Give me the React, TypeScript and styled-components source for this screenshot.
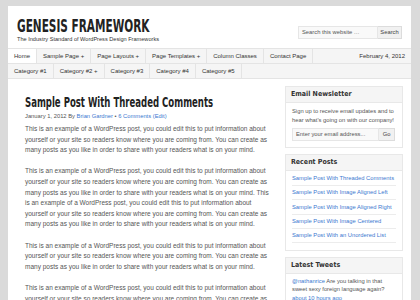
import React from 'react'
import styled, { createGlobalStyle } from 'styled-components'

const GlobalStyle = createGlobalStyle`
  body {
    margin: 0;
    background: #dadada;
    font-family: "Liberation Sans", Arial, sans-serif;
    color: #555;
  }
`

const condensed = `"Liberation Sans Narrow", "DejaVu Sans Condensed", sans-serif`

const Page = styled.div`
  width: 403px;
  height: 294px;
  margin: 6px 0 0 8px;
  background: #fff;
  overflow: hidden;
`

const Header = styled.div`
  display: flex;
  justify-content: space-between;
  align-items: flex-start;
  height: 42px;
  padding: 0 9px;
  box-sizing: border-box;
`

const Branding = styled.div`
  padding-top: 10px;
`

const SiteName = styled.h1`
  margin: 0;
  font-family: ${condensed};
  font-weight: bold;
  font-size: 18px;
  line-height: 19px;
  color: #222;
  white-space: nowrap;
  display: inline-block;
  transform: scale(0.65, 1);
  transform-origin: left;
`

const Tagline = styled.p`
  margin: 0;
  font-size: 5.6px;
  color: #333;
  white-space: nowrap;
`

const SearchForm = styled.form`
  display: flex;
  margin-top: 20px;
`

const SearchInput = styled.div`
  width: 80px;
  height: 13px;
  box-sizing: border-box;
  border: 1px solid #e6e6e6;
  background: #f9f9f9;
  font-size: 5.8px;
  line-height: 11px;
  padding-left: 3px;
  color: #555;
`

const SearchButton = styled.div`
  width: 24px;
  height: 13px;
  box-sizing: border-box;
  border: 1px solid #dcdcdc;
  border-left: none;
  background: #f1f1f1;
  font-size: 5.8px;
  line-height: 11px;
  text-align: center;
  color: #444;
`

const Nav = styled.ul<{ $top?: boolean }>`
  display: flex;
  margin: 0;
  padding: 0;
  list-style: none;
  background: #f5f5f5;
  border-top: ${p => (p.$top ? '1px solid #e4e4e4' : 'none')};
  border-bottom: 1px solid #e4e4e4;
  height: 14px;
`

const NavItem = styled.li<{ $active?: boolean }>`
  padding: 0 6px;
  font-size: 6px;
  line-height: 14px;
  color: #333;
  white-space: nowrap;
  border-right: 1px solid #e4e4e4;
  background: ${p => (p.$active ? '#fff' : 'transparent')};
`

const NavDate = styled.li`
  margin-left: auto;
  padding-right: 6px;
  font-size: 6px;
  line-height: 14px;
  color: #333;
`

const Main = styled.div`
  display: flex;
  justify-content: space-between;
  padding: 0 8px 0 17px;
`

const Content = styled.div`
  width: 246px;
  padding-top: 14px;
`

const PostTitle = styled.h2`
  margin: 0;
  font-family: ${condensed};
  font-weight: bold;
  font-size: 14.5px;
  line-height: 14px;
  color: #222;
  white-space: nowrap;
  display: inline-block;
  transform: scale(0.655, 1);
  transform-origin: left;
`

const Meta = styled.div`
  font-size: 5.8px;
  line-height: 8px;
  color: #555;
  margin: 1px 0 4px;
`

const Link = styled.a`
  color: #3b78d0;
  text-decoration: none;
`

const Para = styled.p`
  margin: 0 0 10.6px;
  font-size: 6.5px;
  line-height: 10.6px;
  color: #555;
`

const Sidebar = styled.div`
  width: 118px;
  padding-top: 7px;
`

const Widget = styled.div`
  border: 1px solid #e8e8e8;
  margin-bottom: 6px;
`

const WidgetTitle = styled.h4`
  margin: 0;
  height: 15px;
  padding-left: 5px;
  background: #f5f5f5;
  border-bottom: 1px solid #e8e8e8;
  font-family: ${condensed};
  font-weight: bold;
  font-size: 7px;
  line-height: 15px;
  color: #333;
`

const WidgetBody = styled.div<{ $list?: boolean }>`
  padding: ${p => (p.$list ? '3px 6px 4px' : '4px 6px 6px')};
  font-size: 5.8px;
  line-height: 8.6px;
  color: #555;
`

const SubscribeRow = styled.div`
  display: flex;
  margin-top: 4px;
`

const EmailInput = styled(SearchInput)`
  width: 87px;
`

const GoButton = styled(SearchButton)`
  width: 16px;
`

const PostList = styled.ul`
  margin: 0;
  padding: 0;
  list-style: none;
`

const PostItem = styled.li`
  line-height: 8px;
  padding-bottom: 3px;
  margin-bottom: 2.3px;
  border-bottom: 1px solid #ececec;
  white-space: nowrap;
`

const TweetTime = styled(Link)`
  display: block;
`

const text =
  'This is an example of a WordPress post, you could edit this to put information about yourself or your site so readers know where you are coming from. You can create as many posts as you like in order to share with your readers what is on your mind.'

const menu = [
  { label: 'Home', active: true },
  { label: 'Sample Page +' },
  { label: 'Page Layouts +' },
  { label: 'Page Templates +' },
  { label: 'Column Classes' },
  { label: 'Contact Page' },
]

const categories = ['Category #1', 'Category #2 +', 'Category #3', 'Category #4', 'Category #5']

const recent = [
  'Sample Post With Threaded Comments',
  'Sample Post With Image Aligned Left',
  'Sample Post With Image Aligned Right',
  'Sample Post With Image Centered',
  'Sample Post With an Unordered List',
]

export default function App() {
  return (
    <>
      <GlobalStyle />
      <Page>
        <Header>
          <Branding>
            <SiteName>GENESIS FRAMEWORK</SiteName>
            <Tagline>The Industry Standard of WordPress Design Frameworks</Tagline>
          </Branding>
          <SearchForm>
            <SearchInput>Search this website …</SearchInput>
            <SearchButton>Search</SearchButton>
          </SearchForm>
        </Header>

        <Nav $top>
          {menu.map(item => (
            <NavItem key={item.label} $active={item.active}>
              {item.label}
            </NavItem>
          ))}
          <NavDate>February 4, 2012</NavDate>
        </Nav>
        <Nav>
          {categories.map(c => (
            <NavItem key={c}>{c}</NavItem>
          ))}
        </Nav>

        <Main>
          <Content>
            <PostTitle>Sample Post With Threaded Comments</PostTitle>
            <Meta>
              January 1, 2012 By <Link href="#">Brian Gardner</Link> • <Link href="#">6 Comments</Link>{' '}
              <Link href="#">(Edit)</Link>
            </Meta>
            <Para>{text}</Para>
            <Para>
              {text} {text}
            </Para>
            <Para>{text}</Para>
            <Para>{text}</Para>
          </Content>

          <Sidebar>
            <Widget>
              <WidgetTitle>Email Newsletter</WidgetTitle>
              <WidgetBody>
                Sign up to receive email updates and to hear what's going on with our company!
                <SubscribeRow>
                  <EmailInput>Enter your email address...</EmailInput>
                  <GoButton>Go</GoButton>
                </SubscribeRow>
              </WidgetBody>
            </Widget>
            <Widget>
              <WidgetTitle>Recent Posts</WidgetTitle>
              <WidgetBody $list>
                <PostList>
                  {recent.map(r => (
                    <PostItem key={r}>
                      <Link href="#">{r}</Link>
                    </PostItem>
                  ))}
                </PostList>
              </WidgetBody>
            </Widget>
            <Widget>
              <WidgetTitle>Latest Tweets</WidgetTitle>
              <WidgetBody $list>
                <Link href="#">@nathanrice</Link> Are you talking in that sweet sexy foreign language again?
                <TweetTime href="#">about 10 hours ago</TweetTime>
              </WidgetBody>
            </Widget>
          </Sidebar>
        </Main>
      </Page>
    </>
  )
}
